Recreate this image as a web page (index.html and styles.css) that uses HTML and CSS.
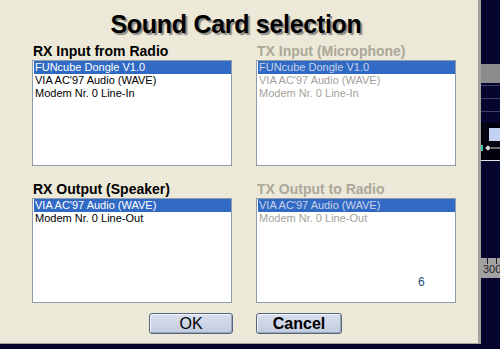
FILE: index.html
```html
<!DOCTYPE html>
<html lang="en">
<head>
    <meta charset="UTF-8">
    <meta name="viewport" content="width=device-width, initial-scale=1.0">
    <title>Sound Card selection</title>
    <link rel="stylesheet" href="styles.css">
</head>
<body>
    <div class="screen">
        <div class="dialog">
            <h1 class="title">Sound Card selection</h1>
            <div class="grid">
                <div class="panel">
                    <div class="label">RX Input from Radio</div>
                    <ul class="list">
                        <li class="selected">FUNcube Dongle V1.0</li>
                        <li>VIA AC'97 Audio (WAVE)</li>
                        <li>Modem Nr. 0 Line-In</li>
                    </ul>
                </div>
                <div class="panel disabled">
                    <div class="label">TX Input (Microphone)</div>
                    <ul class="list">
                        <li class="selected">FUNcube Dongle V1.0</li>
                        <li>VIA AC'97 Audio (WAVE)</li>
                        <li>Modem Nr. 0 Line-In</li>
                    </ul>
                </div>
                <div class="panel">
                    <div class="label">RX Output (Speaker)</div>
                    <ul class="list">
                        <li class="selected">VIA AC'97 Audio (WAVE)</li>
                        <li>Modem Nr. 0 Line-Out</li>
                    </ul>
                </div>
                <div class="panel disabled">
                    <div class="label">TX Output to Radio</div>
                    <ul class="list">
                        <li class="selected">VIA AC'97 Audio (WAVE)</li>
                        <li>Modem Nr. 0 Line-Out</li>
                    </ul>
                    <span class="count">6</span>
                </div>
                <button class="btn btn-ok" type="button">OK</button>
                <button class="btn btn-cancel" type="button">Cancel</button>
            </div>
        </div>

        <div class="side">
            <div class="band"></div>
            <div class="rule r1"></div>
            <div class="rule"></div>
            <div class="rule"></div>
            <div class="dark">
                <div class="knob"></div>
                <div class="slider">
                    <span class="mark"></span>
                    <span class="diamond"></span>
                </div>
            </div>
            <div class="scale">
                <div class="ticks"></div>
                <span>300</span>
            </div>
        </div>
    </div>
</body>
</html>
```

FILE: styles.css
```css
body {
    margin: 0;
    padding: 0;
    background-color: #05052f;
    font-family: 'Liberation Sans', Arial, sans-serif;
    overflow: hidden;
}
.screen {
    display: flex;
    width: 500px;
    height: 349px;
}
.dialog {
    width: 478px;
    height: 343px;
    background-color: #ece9d8;
    border-right: 3px solid #a3a29c;
    border-bottom: 1px solid #a3a29c;
}
.title {
    margin: 9px 0 4px 0;
    padding-right: 6px;
    height: 30px;
    font-size: 25px;
    line-height: 30px;
    font-weight: bold;
    letter-spacing: -0.3px;
    text-align: center;
    color: #000;
    text-shadow: 2px 2px 1px #8a8a86;
}
.grid {
    display: grid;
    grid-template-columns: 200px 200px;
    column-gap: 24px;
    row-gap: 15px;
    padding-left: 32px;
}
.panel {
    display: flex;
    flex-direction: column;
    position: relative;
}
.label {
    height: 17px;
    font-size: 14px;
    line-height: 16px;
    font-weight: bold;
    padding-left: 1px;
    color: #000;
}
.disabled .label {
    color: #aca899;
}
.list {
    list-style: none;
    margin: 0;
    padding: 0 0 0 1px;
    height: 104px;
    background-color: #fff;
    border: 1px solid #8f9cab;
}
.panel:nth-child(n+3) .list {
    height: 103px;
}
.list li {
    font-size: 11px;
    line-height: 13px;
    height: 13px;
    padding-left: 1px;
    color: #000;
    white-space: nowrap;
}
.list li.selected {
    background-color: #316ac5;
    color: #fff;
}
.disabled .list li {
    color: #a4a29a;
}
.disabled .list li.selected {
    color: #c9d3e8;
}
.count {
    position: absolute;
    left: 162px;
    top: 95px;
    font-size: 12px;
    line-height: 12px;
    color: #1d4f80;
}
.btn {
    margin-top: -5px;
    height: 21px;
    padding: 0;
    font-family: 'Liberation Sans', Arial, sans-serif;
    font-size: 16px;
    line-height: 18px;
    color: #000;
    background: linear-gradient(#d9dfee, #c2cbdf);
    border: 1px solid #56647e;
    border-radius: 3px;
    box-shadow: inset 1px 1px 0 #f4f6fb, inset -1px -1px 0 #9aa4b8;
}
.btn-ok {
    width: 84px;
    justify-self: end;
    margin-right: -1px;
}
.btn-cancel {
    width: 86px;
    justify-self: start;
    font-weight: bold;
}
.side {
    width: 19px;
    display: flex;
    flex-direction: column;
}
.band {
    margin-top: 64px;
    height: 19px;
    background-color: #8b8b8d;
}
.rule {
    margin-top: 12px;
    height: 1px;
    background-color: #3f3f6c;
}
.r1 {
    margin-top: 2px;
}
.dark {
    margin-top: 11px;
    height: 37px;
    background-color: #02020e;
    border-bottom: 1px solid #e4e4e4;
    display: flex;
    flex-direction: column;
}
.knob {
    margin: 5px 0 0 8px;
    width: 11px;
    height: 13px;
    background-color: #c4d2f2;
}
.slider {
    margin-top: 5px;
    display: flex;
    align-items: center;
    height: 4px;
}
.mark {
    width: 2px;
    height: 6px;
    background-color: #3bc6b4;
}
.diamond {
    margin-left: 3px;
    width: 4px;
    height: 4px;
    background-color: #d8d8d8;
    transform: rotate(45deg);
}
.slider::after {
    content: "";
    flex: 1;
    height: 2px;
    margin-left: 1px;
    background-color: #6e6e6e;
}
.scale {
    margin-top: 97px;
    height: 20px;
    background-color: #a2a2a2;
    font-size: 11px;
    line-height: 10px;
    color: #1e1e1e;
    padding-left: 2px;
    box-sizing: border-box;
    overflow: hidden;
}
.ticks {
    height: 6px;
    margin-left: 4px;
    width: 8px;
    border-left: 1px solid #1e1e1e;
    border-right: 1px solid #1e1e1e;
}
```
